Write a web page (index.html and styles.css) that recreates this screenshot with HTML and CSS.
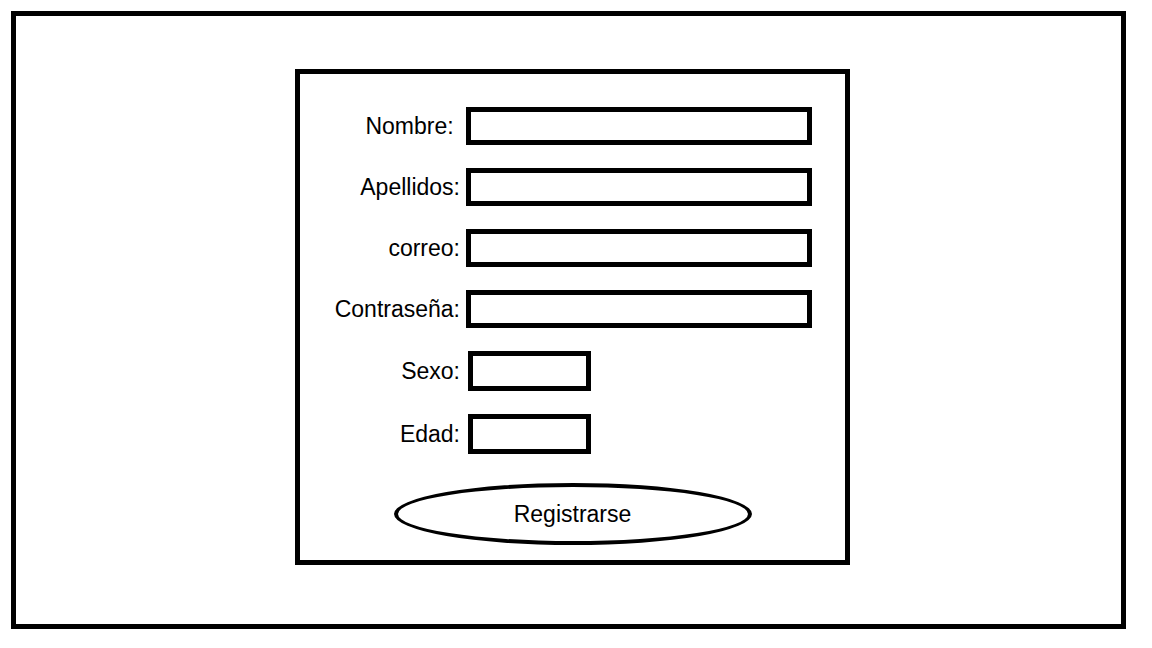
FILE: index.html
```html
<!DOCTYPE html>
<html lang="es">
<head>
    <meta charset="UTF-8">
    <meta name="viewport" content="width=device-width, initial-scale=1.0">
    <link rel="stylesheet" href="styles.css">
</head>
<body>
    <div class="page">
        <form class="register-card">
            <div class="fields">
                <label class="field-label" for="nombre">Nombre:&nbsp;</label>
                <input id="nombre" class="field-input" type="text">

                <label class="field-label" for="apellidos">Apellidos:</label>
                <input id="apellidos" class="field-input" type="text">

                <label class="field-label" for="correo">correo:</label>
                <input id="correo" class="field-input" type="text">

                <label class="field-label" for="pass">Contraseña:</label>
                <input id="pass" class="field-input" type="password">

                <label class="field-label" for="sexo">Sexo:</label>
                <input id="sexo" class="field-input short" type="text">

                <label class="field-label" for="edad">Edad:</label>
                <input id="edad" class="field-input short" type="text">
            </div>

            <button type="button" class="btn-register">Registrarse</button>
        </form>
    </div>
</body>
</html>
```

FILE: styles.css
```css
body, html {
    margin: 0;
    padding: 0;
    background: #fff;
    font-family: 'Liberation Sans', Arial, sans-serif;
    color: #000;
}

.page {
    box-sizing: border-box;
    width: 1115px;
    height: 618px;
    margin: 11px 0 0 11px;
    border: 5px solid #000;
    padding: 53px 0 0 279px; /* card sits a little right of centre */
}

.register-card {
    box-sizing: border-box;
    width: 555px;
    height: 496px;
    border: 5px solid #000;
    padding-top: 33px;
    display: flex;
    flex-direction: column;
    align-items: center;
}

.fields {
    align-self: flex-start;
    display: grid;
    grid-template-columns: 160px max-content;
    column-gap: 6px;
    row-gap: 23px;
}

.field-label {
    align-self: center;
    justify-self: end;
    font-size: 23px;
    line-height: 1;
    white-space: nowrap;
}

.field-input {
    box-sizing: border-box;
    width: 346px;
    height: 38px;
    margin: 0;
    border: 5px solid #000;
    border-radius: 0;
    background: #fff;
    outline: none;
}

.field-input.short {
    width: 123px;
    height: 40px;
    margin-left: 2px;
}

.btn-register {
    box-sizing: border-box;
    width: 358px;
    height: 62px;
    margin-top: 29px;
    border: 4px solid #000;
    border-radius: 50%;
    background: #fff;
    color: #000;
    font-family: 'Liberation Sans', Arial, sans-serif;
    font-size: 23px;
    padding: 0;
    cursor: pointer;
}
```
